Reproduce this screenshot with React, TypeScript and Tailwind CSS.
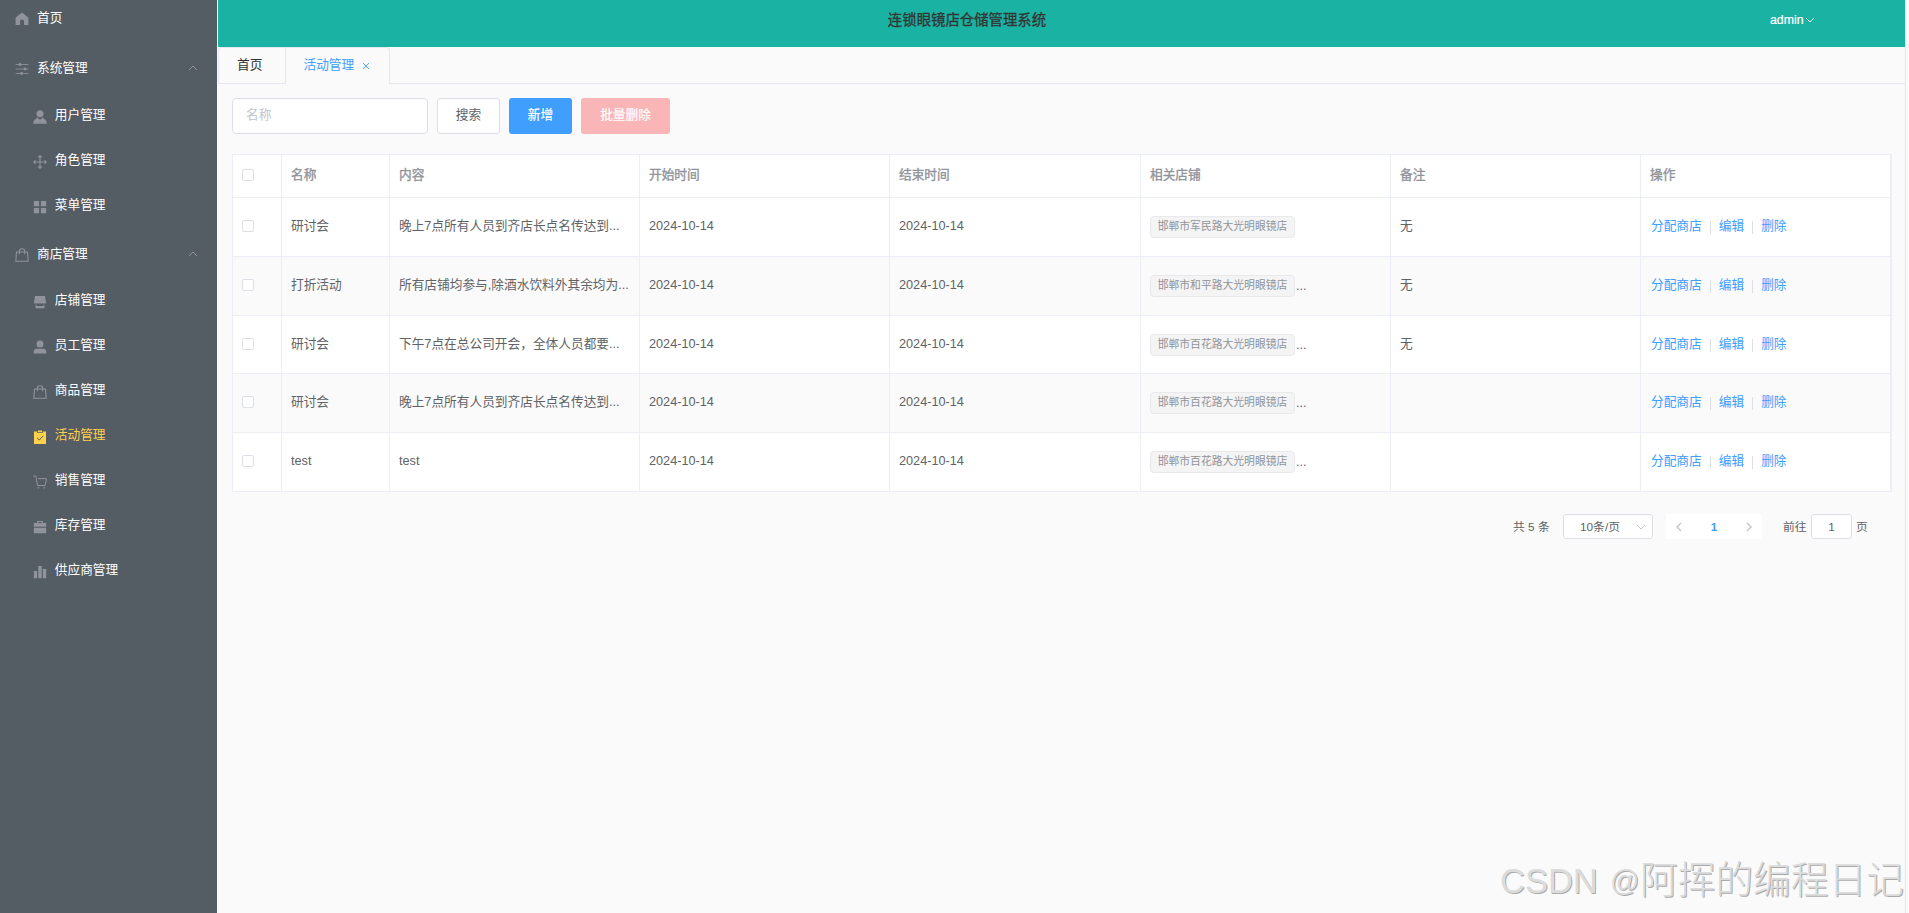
import type { ReactNode } from 'react';

const ICONS: Record<string, ReactNode> = {
  home: <path fill="currentColor" d="M7 .6 13 5.2q.4.3.4.8V13H9V9.6a2 2 0 0 0-4 0V13H.6V6q0-.5.4-.8Z" />,
  operation: (
    <g fill="currentColor">
      <path d="M.6 2h12.8v1H.6zM.6 6.5h12.8v1H.6zM.6 11h12.8v1H.6z" opacity=".85" />
      <circle cx="5" cy="2.5" r="1.4" />
      <circle cx="10" cy="7" r="1.4" />
      <circle cx="6.5" cy="11.5" r="1.4" />
    </g>
  ),
  custom: (
    <g fill="currentColor">
      <circle cx="7" cy="3.8" r="3.5" />
      <path d="M4.4 7.6 7 9.8l2.6-2.2 3.2 2.6q.9 1.4.9 3.6H.3q0-2.2.9-3.6Z" />
    </g>
  ),
  rank: (
    <path
      fill="none"
      stroke="currentColor"
      strokeWidth="1.15"
      d="M7 .8v12.4M.8 7h12.4M5.2 2.5 7 .7l1.8 1.8M5.2 11.5 7 13.3l1.8-1.8M2.5 5.2.7 7l1.8 1.8M11.5 5.2 13.3 7l-1.8 1.8"
    />
  ),
  menu: <path fill="currentColor" d="M.8 1h5.3v5.3H.8zM7.9 1h5.3v5.3H7.9zM.8 8h5.3v5.3H.8zM7.9 8h5.3v5.3H7.9z" />,
  goods: (
    <path
      fill="none"
      stroke="currentColor"
      strokeWidth="1.1"
      d="M1.5 4h11l.7 9.3H.8ZM4.3 6.3V3.4a2.7 2.7 0 0 1 5.4 0v2.9"
    />
  ),
  shop: (
    <g fill="currentColor">
      <path d="M2 1h10l1 6.2q0 1.6-1.6 1.6-1 0-1.5-.7-.5.7-1.5.7T7 8.1q-.4.7-1.4.7t-1.5-.7q-.5.7-1.5.7Q1 8.8 1 7.2Z" />
      <path d="M2.6 9.6h1v1.3h6.8V9.6h1v3.6H2.6z" />
    </g>
  ),
  user: (
    <g fill="currentColor">
      <circle cx="7" cy="4" r="3.5" />
      <path d="M3.5 8.8h7q2.8.4 2.8 3.4v1.3H.7v-1.3q0-3 2.8-3.4Z" />
    </g>
  ),
  claim: (
    <g>
      <path fill="currentColor" d="M1 1.4h3v1.4h6V1.4h3V14H1zM4.8.4h4.4V2H4.8z" />
      <path fill="none" stroke="#545c64" strokeWidth="1" d="m4 7.8 2.3 2.2 4-4.2" />
    </g>
  ),
  cart: (
    <g fill="none" stroke="currentColor" strokeWidth="1">
      <path d="M.2 1h2.6l1.7 9.5h7.6L13.5 3.6H5" />
      <circle cx="5.3" cy="12.8" r=".5" />
      <circle cx="11.2" cy="12.8" r=".5" />
    </g>
  ),
  briefcase: (
    <path fill="currentColor" d="M4 3V1h6v2h3.2v3.8H.8V3Zm1.2 0h3.6v-.9H5.2ZM.8 7.8h12.4v5.4H.8z" />
  ),
  data: <path fill="currentColor" d="M.8 6h3.4v7.2H.8zM5.3 1h3.4v12.2H5.3zM9.8 4h3.4v9.2H9.8z" />,
};

function Icon({ name }: { name: string }) {
  return (
    <svg viewBox="0 0 14 14" className="h-[14px] w-[14px] shrink-0">
      {ICONS[name]}
    </svg>
  );
}

function Chevron({ className, d = 'M1 3 5 7l4-4' }: { className: string; d?: string }) {
  return (
    <svg viewBox="0 0 10 10" className={className} fill="none" stroke="currentColor" strokeWidth="1">
      <path d={d} />
    </svg>
  );
}

function TopItem({ icon, label, group }: { icon: string; label: string; group?: boolean }) {
  return (
    <div className="flex h-[50.4px] items-center pr-[19px] pl-[15px]">
      <span className="mt-[2px] flex text-[#909399]">
        <Icon name={icon} />
      </span>
      <span className="ml-2 flex-1 text-white">{label}</span>
      {group && <Chevron className="h-[10px] w-[10px] text-[#909399]" d="M1 7l4-4 4 4" />}
    </div>
  );
}

function SubItem({ icon, label, active }: { icon: string; label: string; active?: boolean }) {
  return (
    <div className="flex h-[45px] items-center pb-[3px] pl-[33px]">
      <span className={active ? 'mt-[4px] flex text-[#ffd04b]' : 'mt-[4px] flex text-[#909399]'}>
        <Icon name={icon} />
      </span>
      <span className={active ? 'ml-[7.8px] text-[#ffd04b]' : 'ml-[7.8px] text-white'}>{label}</span>
    </div>
  );
}

function Checkbox() {
  return <span className="block h-[12px] w-[12px] rounded-[2px] border border-[#dcdfe6] bg-white" />;
}

const COLS = 'grid grid-cols-[49px_108px_250px_250px_251px_250px_250px_250px]';
const HEADERS = ['名称', '内容', '开始时间', '结束时间', '相关店铺', '备注', '操作'];

const ROWS = [
  { name: '研讨会', text: '晚上7点所有人员到齐店长点名传达到...', shop: '邯郸市军民路大光明眼镜店', more: false, note: '无', h: 'h-[59px]' },
  { name: '打折活动', text: '所有店铺均参与,除酒水饮料外其余均为...', shop: '邯郸市和平路大光明眼镜店', more: true, note: '无', h: 'h-[59px]' },
  { name: '研讨会', text: '下午7点在总公司开会，全体人员都要...', shop: '邯郸市百花路大光明眼镜店', more: true, note: '无', h: 'h-[58px]' },
  { name: '研讨会', text: '晚上7点所有人员到齐店长点名传达到...', shop: '邯郸市百花路大光明眼镜店', more: true, note: '', h: 'h-[59px]' },
  { name: 'test', text: 'test', shop: '邯郸市百花路大光明眼镜店', more: true, note: '', h: 'h-[59px]' },
];

const BOX = 'flex items-center overflow-hidden whitespace-nowrap border-r border-b border-[#ebeef5] pl-[9px]';
const CELL = `${BOX} pb-[2px]`;

export default function App() {
  return (
    <div className="flex h-[913px] w-[1909px] overflow-hidden bg-[#fafafa] text-[12.7px] leading-[20px] text-[#606266] [font-family:'Liberation_Sans','Noto_Sans_CJK_SC',sans-serif]">
      <aside className="h-full w-[217px] shrink-0 overflow-hidden bg-[#545c64]">
        <nav className="-mt-[7.2px]">
          <TopItem icon="home" label="首页" />
          <TopItem icon="operation" label="系统管理" group />
          <SubItem icon="custom" label="用户管理" />
          <SubItem icon="rank" label="角色管理" />
          <SubItem icon="menu" label="菜单管理" />
          <TopItem icon="goods" label="商店管理" group />
          <SubItem icon="shop" label="店铺管理" />
          <SubItem icon="user" label="员工管理" />
          <SubItem icon="goods" label="商品管理" />
          <SubItem icon="claim" label="活动管理" active />
          <SubItem icon="cart" label="销售管理" />
          <SubItem icon="briefcase" label="库存管理" />
          <SubItem icon="data" label="供应商管理" />
        </nav>
      </aside>

      <main className="ml-px flex h-full w-[1688px] shrink-0 flex-col border-r border-[#e6e6e6]">
        <header className="flex h-[47px] shrink-0 items-center bg-[#1ab3a3] pb-[7px]">
          <div className="w-[1498px] text-center text-[14.4px] text-[#333] [-webkit-text-stroke:0.3px_#333]">连锁眼镜店仓储管理系统</div>
          <div className="ml-[54px] flex items-center text-[12.3px] text-white [-webkit-text-stroke:0.2px_white]">
            admin
            <Chevron className="ml-[1px] h-[10px] w-[10px]" />
          </div>
        </header>

        <div className="flex h-[37px] shrink-0">
          <div className="flex rounded-t-[4px] border-t border-r border-l border-[#e4e7ed]">
            <div className="flex w-[67px] items-center border-r border-b border-[#e4e7ed] pb-px pl-[18px] text-[#303133]">首页</div>
            <div className="flex w-[103px] items-center pb-[2px] pl-[17.5px] text-[#409eff]">
              活动管理
              <svg viewBox="0 0 10 10" className="mt-[2px] ml-[7px] h-[10px] w-[10px]" fill="none" stroke="currentColor" strokeWidth=".9">
                <path d="m2 2 6 6M8 2 2 8" />
              </svg>
            </div>
          </div>
          <div className="flex-1 border-b border-[#e4e7ed]" />
        </div>

        <section className="px-[14px] pt-[14px]">
          <div className="flex h-[36px] gap-[9px]">
            <div className="flex w-[196px] items-center rounded-[4px] border border-[#dcdfe6] bg-white pb-[2px] pl-[13px] text-[#c0c4cc]">名称</div>
            <button className="w-[63px] rounded-[3px] border border-[#dcdfe6] bg-white pb-[2px]">搜索</button>
            <button className="w-[63px] rounded-[3px] bg-[#409eff] pb-[2px] text-white [-webkit-text-stroke:0.2px_white]">新增</button>
            <button className="w-[89px] rounded-[3px] bg-[#fab6b6] pb-[2px] text-white [-webkit-text-stroke:0.2px_white]">批量删除</button>
          </div>

          <div className="mt-[20px] w-[1660px] border-t border-r border-l border-[#ebeef5] bg-white">
            <div className={`${COLS} h-[43px] text-[#909399] [-webkit-text-stroke:0.35px_#909399]`}>
              <div className={CELL}>
                <Checkbox />
              </div>
              {HEADERS.map((h) => (
                <div key={h} className={CELL}>
                  {h}
                </div>
              ))}
            </div>
            {ROWS.map((r, i) => (
              <div key={i} className={`${COLS} ${r.h} ${i % 2 ? 'bg-[#fafafa]' : 'bg-white'}`}>
                <div className={CELL}>
                  <Checkbox />
                </div>
                <div className={CELL}>{r.name}</div>
                <div className={CELL}>{r.text}</div>
                <div className={CELL}>2024-10-14</div>
                <div className={CELL}>2024-10-14</div>
                <div className={BOX}>
                  <span className="flex h-[22px] w-[145px] items-center justify-center rounded-[4px] border border-[#e9e9eb] bg-[#f4f4f5] pb-[2px] text-[10.8px] text-[#909399]">
                    {r.shop}
                  </span>
                  {r.more && <span className="ml-[1px]">...</span>}
                </div>
                <div className={CELL}>{r.note}</div>
                <div className={CELL}>
                  <div className="flex items-center pl-[1px] text-[#409eff]">
                    <span>分配商店</span>
                    <span className="mx-2 mt-[3px] h-[13px] w-px bg-[#dcdfe6]" />
                    <span>编辑</span>
                    <span className="mx-2 mt-[3px] h-[13px] w-px bg-[#dcdfe6]" />
                    <span>删除</span>
                  </div>
                </div>
              </div>
            ))}
          </div>

          <div className="mt-[22px] flex h-[25px] items-center pl-[1281px] text-[11.8px]">
            <span className="w-[50px] shrink-0">共 5 条</span>
            <div className="flex h-[25px] w-[90px] shrink-0 items-center rounded-[3px] border border-[#dcdfe6] bg-white pl-[16px]">
              <span className="w-[56px]">10条/页</span>
              <Chevron className="h-[10px] w-[10px] text-[#c0c4cc]" />
            </div>
            <div className="ml-[13px] flex h-[25px] w-[96px] shrink-0 items-center justify-between bg-white px-[8px]">
              <svg viewBox="0 0 10 10" className="h-[10px] w-[10px] text-[#c0c4cc]" fill="none" stroke="currentColor" strokeWidth="1.4">
                <path d="M7 1 3 5l4 4" />
              </svg>
              <span className="font-bold text-[#409eff]">1</span>
              <svg viewBox="0 0 10 10" className="h-[10px] w-[10px] text-[#c0c4cc]" fill="none" stroke="currentColor" strokeWidth="1.4">
                <path d="m3 1 4 4-4 4" />
              </svg>
            </div>
            <span className="ml-[21px] w-[28px] shrink-0">前往</span>
            <div className="flex h-[25px] w-[41px] shrink-0 items-center justify-center rounded-[3px] border border-[#dcdfe6] bg-white">1</div>
            <span className="ml-[4px] shrink-0">页</span>
          </div>
        </section>
      </main>

      <div className="absolute top-[853px] left-[1500px] flex items-baseline whitespace-nowrap leading-[54px] text-[#dcdcdc] [text-shadow:1px_1px_0.5px_#aaa]">
        <span className="w-[110px] text-[34.5px]">CSDN</span>
        <span className="relative -top-[2px] w-[30px] text-[29px]">@</span>
        <span className="text-[37.7px] font-light">阿挥的编程日记</span>
      </div>
    </div>
  );
}
